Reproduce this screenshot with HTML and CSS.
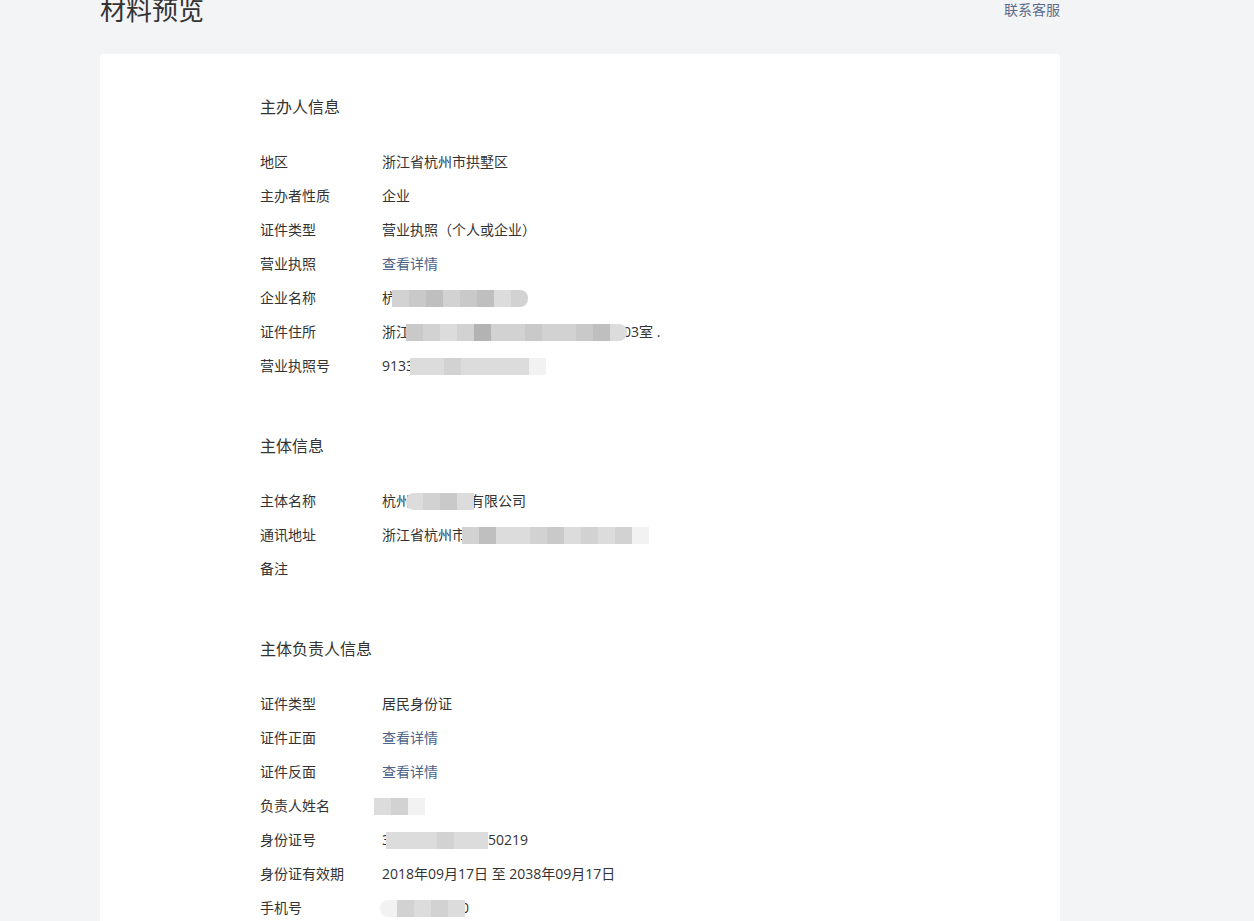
FILE: index.html
```html
<!DOCTYPE html>
<html lang="zh-CN">
<head>
    <meta charset="UTF-8">
    <meta name="viewport" content="width=device-width, initial-scale=1.0">
    <title>材料预览</title>
    <link rel="stylesheet" href="styles.css">
</head>
<body>
    <div class="page">
        <header class="page-header">
            <h1>材料预览</h1>
            <a class="service-link" href="#">联系客服</a>
        </header>

        <div class="card">
            <section class="info-section">
                <h2>主办人信息</h2>
                <div class="info-row"><span class="label">地区</span><span class="value">浙江省杭州市拱墅区</span></div>
                <div class="info-row"><span class="label">主办者性质</span><span class="value">企业</span></div>
                <div class="info-row"><span class="label">证件类型</span><span class="value">营业执照（个人或企业）</span></div>
                <div class="info-row"><span class="label">营业执照</span><a class="value link" href="#">查看详情</a></div>
                <div class="info-row"><span class="label">企业名称</span>
                    <span class="value">杭<span class="mosaic round-r cut-l"><i class="s2"></i><i class="s3"></i><i class="s4"></i><i class="s2"></i><i class="s3"></i><i class="s4"></i><i class="s1"></i><i class="s2"></i></span></span>
                </div>
                <div class="info-row"><span class="label">证件住所</span>
                    <span class="value">浙江<span class="mosaic round-r cut-l"><i class="s3"></i><i class="s2"></i><i class="s1"></i><i class="s2"></i><i class="s5"></i><i class="s2"></i><i class="s2"></i><i class="s3"></i><i class="s2"></i><i class="s2"></i><i class="s3"></i><i class="s4"></i><i class="s1"></i></span><span class="cut-r">03</span>室 .</span>
                </div>
                <div class="info-row"><span class="label">营业执照号</span>
                    <span class="value">9133<span class="mosaic cut-l"><i class="s1"></i><i class="s1"></i><i class="s2"></i><i class="s1"></i><i class="s1"></i><i class="s1"></i><i class="s1"></i><i class="s6"></i></span></span>
                </div>
            </section>

            <section class="info-section">
                <h2>主体信息</h2>
                <div class="info-row"><span class="label">主体名称</span>
                    <span class="value">杭州<span class="mosaic round-l cut-l"><i class="s1"></i><i class="s2"></i><i class="s3"></i><i class="s1"></i></span><span class="cut-r">有</span>限公司</span>
                </div>
                <div class="info-row"><span class="label">通讯地址</span>
                    <span class="value">浙江省杭州市<span class="mosaic cut-l"><i class="s2"></i><i class="s4"></i><i class="s1"></i><i class="s1"></i><i class="s2"></i><i class="s3"></i><i class="s1"></i><i class="s2"></i><i class="s1"></i><i class="s2"></i><i class="s6"></i></span></span>
                </div>
                <div class="info-row"><span class="label">备注</span><span class="value"></span></div>
            </section>

            <section class="info-section">
                <h2>主体负责人信息</h2>
                <div class="info-row"><span class="label">证件类型</span><span class="value">居民身份证</span></div>
                <div class="info-row"><span class="label">证件正面</span><a class="value link" href="#">查看详情</a></div>
                <div class="info-row"><span class="label">证件反面</span><a class="value link" href="#">查看详情</a></div>
                <div class="info-row"><span class="label">负责人姓名</span>
                    <span class="value"><span class="mosaic shift-l"><i class="s1"></i><i class="s2"></i><i class="s6"></i></span></span>
                </div>
                <div class="info-row"><span class="label">身份证号</span>
                    <span class="value">3<span class="mosaic cut-l"><i class="s1"></i><i class="s1"></i><i class="s1"></i><i class="s2"></i><i class="s1"></i><i class="s1"></i></span>50219</span>
                </div>
                <div class="info-row"><span class="label">身份证有效期</span><span class="value">2018年09月17日 至 2038年09月17日</span></div>
                <div class="info-row"><span class="label">手机号</span>
                    <span class="value"><span class="mosaic shift-s round-l"><i class="s6"></i><i class="s2"></i><i class="s1"></i><i class="s2"></i><i class="s1"></i></span><span class="cut-r">0</span></span>
                </div>
            </section>
        </div>
    </div>
</body>
</html>
```

FILE: styles.css
```css
body {
    font-family: "Open Sans", "Noto Sans CJK SC", sans-serif;
    background-color: #f3f4f6;
    color: #333;
    margin: 0;
    padding: 0;
}
.page {
    width: 960px;
    margin-left: 100px;
}
.page-header {
    display: flex;
    justify-content: space-between;
    align-items: center;
    height: 20px;
}
.page-header h1 {
    margin: 0;
    font-size: 26px;
    font-weight: normal;
    line-height: 20px;
    color: #333;
}
.service-link {
    font-size: 14px;
    line-height: 20px;
    color: #5b6b8c;
    text-decoration: none;
}
.card {
    margin-top: 34px;
    background-color: #fff;
    border-radius: 4px;
    padding: 40px 0 0 160px;
    min-height: 900px;
}
.info-section {
    margin-bottom: 50px;
}
.info-section h2 {
    margin: 0 0 25px;
    font-size: 16px;
    font-weight: normal;
    line-height: 26px;
    color: #333;
}
.info-row {
    display: flex;
    height: 34px;
    line-height: 34px;
    font-size: 14px;
}
.label {
    width: 122px;
    flex-shrink: 0;
}
.value {
    color: #333;
    text-decoration: none;
    white-space: nowrap;
}
.link {
    color: #4b6289;
}
.mosaic {
    display: inline-flex;
    vertical-align: middle;
    height: 17px;
    position: relative;
    top: -1px;
    overflow: hidden;
}
.mosaic i {
    display: block;
    width: 17px;
    height: 17px;
}
.cut-l {
    margin-left: -4px;
}
.cut-r {
    margin-left: -4px;
}
.shift-l {
    margin-left: -8px;
}
.shift-s {
    margin-left: -2px;
}
.round-r {
    border-radius: 0 8px 8px 0;
}
.round-l {
    border-radius: 8px 0 0 8px;
}
.s1 { background-color: #dcdcdc; }
.s2 { background-color: #d2d2d2; }
.s3 { background-color: #c9c9c9; }
.s4 { background-color: #bfbfbf; }
.s5 { background-color: #b3b3b3; }
.s6 { background-color: #f2f2f2; }
```
